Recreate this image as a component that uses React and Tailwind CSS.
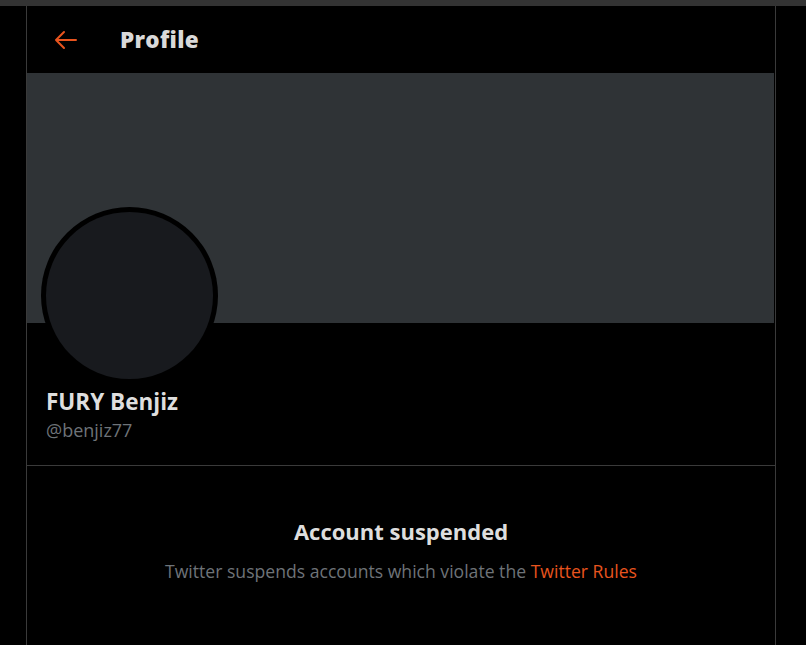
import React from "react";

export default function App() {
  return (
    <div className="w-[806px] h-[645px] bg-black overflow-hidden flex flex-col" style={{ fontFamily: '"Open Sans", "Noto Sans", sans-serif' }}>
      <div className="h-[6px] bg-[#333333] shrink-0" />
      <div className="flex flex-1">
        <div className="w-[26px] shrink-0" />
        <div className="w-[750px] border-l border-r border-[#3a3a3a] flex flex-col">
          <div className="h-[67px] flex items-center shrink-0">
            <div className="w-[93px] pl-[27px] flex items-center">
              <svg width="24" height="24" viewBox="0 0 24 24" fill="none" stroke="#e8541e" strokeWidth="2" strokeLinecap="round" strokeLinejoin="round">
                <path d="M22 12H2M10 4l-8 8 8 8" />
              </svg>
            </div>
            <div className="text-[22.5px] font-extrabold text-[#d9d9d9] tracking-[0.3px]">Profile</div>
          </div>
          <div className="h-[250px] bg-[#2f3336] mr-[1px] shrink-0" />
          <div className="relative px-[19px] h-[143px] border-b border-[#3a3a3a] shrink-0">
            <div className="absolute left-[14px] top-[-116px] w-[177px] h-[177px] rounded-full bg-black p-[5px]">
              <div className="w-full h-full rounded-full bg-[#181a1e]" />
            </div>
            <div className="pt-[64px] text-[22.5px] font-bold text-[#dedede] leading-[30px]">FURY Benjiz</div>
            <div className="text-[18px] text-[#6e7378] leading-[24px] mt-[1px]">@benjiz77</div>
          </div>
          <div className="flex flex-col items-center pt-[49px]">
            <div className="text-[22px] font-bold text-[#dedede] leading-[32px]">Account suspended</div>
            <div className="text-[17.6px] text-[#6e7378] mt-[12px] leading-[24px]">
              Twitter suspends accounts which violate the <span className="text-[#e8541e]">Twitter Rules</span>
            </div>
          </div>
        </div>
        <div className="flex-1" />
      </div>
    </div>
  );
}
